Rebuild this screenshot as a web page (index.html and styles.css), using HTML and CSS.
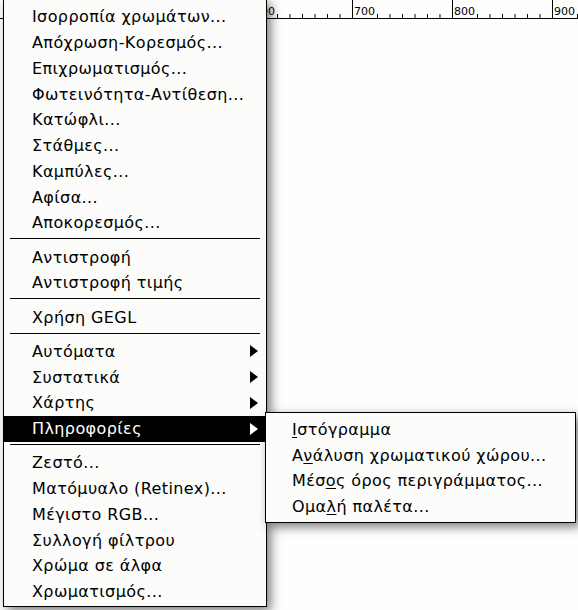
FILE: index.html
```
<!DOCTYPE html>
<html lang="el">
<head>
<meta charset="utf-8">
<title>Χρώματα</title>
<link rel="stylesheet" href="styles.css">
</head>
<body>
<div class="canvas">
  <div class="ruler">
    <div class="seg"><span class="lbl">600</span></div>
    <div class="seg"><span class="lbl">700</span></div>
    <div class="seg"><span class="lbl">800</span></div>
    <div class="seg"><span class="lbl">900</span></div>
  </div>
</div>

<div class="menu main-menu">
  <div class="item">Ισορροπία χρωμάτων...</div>
  <div class="item">Απόχρωση-Κορεσμός...</div>
  <div class="item">Επιχρωματισμός...</div>
  <div class="item">Φωτεινότητα-Αντίθεση...</div>
  <div class="item">Κατώφλι...</div>
  <div class="item">Στάθμες...</div>
  <div class="item">Καμπύλες...</div>
  <div class="item">Αφίσα...</div>
  <div class="item">Αποκορεσμός...</div>
  <div class="sep"></div>
  <div class="item">Αντιστροφή</div>
  <div class="item">Αντιστροφή τιμής</div>
  <div class="sep"></div>
  <div class="item">Χρήση GEGL</div>
  <div class="sep"></div>
  <div class="item sub">Αυτόματα<span class="arrow"></span></div>
  <div class="item sub">Συστατικά<span class="arrow"></span></div>
  <div class="item sub">Χάρτης<span class="arrow"></span></div>
  <div class="item sub active">Πληροφορίες<span class="arrow"></span></div>
  <div class="sep"></div>
  <div class="item">Ζεστό...</div>
  <div class="item">Ματόμυαλο (Retinex)...</div>
  <div class="item">Μέγιστο RGB...</div>
  <div class="item">Συλλογή φίλτρου</div>
  <div class="item">Χρώμα σε άλφα</div>
  <div class="item">Χρωματισμός...</div>
</div>

<div class="menu sub-menu">
  <div class="item"><u>Ι</u>στόγραμμα</div>
  <div class="item">Α<u>ν</u>άλυση χρωματικού χώρου...</div>
  <div class="item">Μέσ<u>ο</u>ς όρος περιγράμματος...</div>
  <div class="item">Ομα<u>λ</u>ή παλέτα...</div>
</div>
</body>
</html>
```
FILE: styles.css
```
html, body {
  margin: 0;
  padding: 0;
  background: #fefefd;
  width: 578px;
  height: 610px;
  overflow: hidden;
}

body {
  position: relative;
  font-family: "DejaVu Sans", "Noto Sans", sans-serif;
  color: #000;
}

.canvas {
  height: 610px;
  background: #fefefd;
}

.ruler {
  display: flex;
  height: 18px;
  border-bottom: 1px solid #000;
  padding-left: 252px;
  overflow: hidden;
}

.seg {
  flex: 0 0 100px;
  box-sizing: border-box;
  border-left: 1px solid #000;
  height: 18px;
  background-image: linear-gradient(to right, #000 0 1px, transparent 1px);
  background-size: 12.5px 4px;
  background-repeat: repeat-x;
  background-position: -1px bottom;
}

.lbl {
  display: inline-block;
  font-family: "DejaVu Sans", sans-serif;
  font-size: 11px;
  line-height: 13px;
  padding: 3px 1px 0 1px;
  height: 13px;
  background: #fefefd;
}

.menu {
  position: absolute;
  box-sizing: border-box;
  background: #fcfcfb;
  border: 1px solid #000;
  font-size: 16px;
  letter-spacing: 0.4px;
  box-shadow: 4px 4px 10px rgba(0, 0, 0, 0.5);
}

.main-menu {
  left: 3px;
  top: -1px;
  width: 264px;
  height: 608px;
  padding: 4px 0 2px 0;
}

.sub-menu {
  left: 265px;
  top: 412px;
  width: 311px;
  height: 111px;
  padding: 4px 0 2px 0;
}

.item {
  height: 25.75px;
  display: flex;
  align-items: center;
  padding-left: 28px;
  padding-right: 8px;
  white-space: nowrap;
}

.sub-menu .item {
  height: 25.5px;
  padding-left: 26px;
}

.item.sub {
  justify-content: space-between;
}

.arrow {
  width: 0;
  height: 0;
  border-left: 8px solid #000;
  border-top: 6px solid transparent;
  border-bottom: 6px solid transparent;
}

.item.active {
  background: #000;
  color: #fff;
}

.item.active .arrow {
  border-left-color: #fff;
}

.sep {
  height: 8.5px;
  box-sizing: border-box;
  padding-top: 2.5px;
  margin: 0 6px;
}

.sep::before {
  content: "";
  display: block;
  height: 1px;
  background: #000;
}

u {
  text-decoration-thickness: 1px;
  text-underline-offset: 2px;
}
```
